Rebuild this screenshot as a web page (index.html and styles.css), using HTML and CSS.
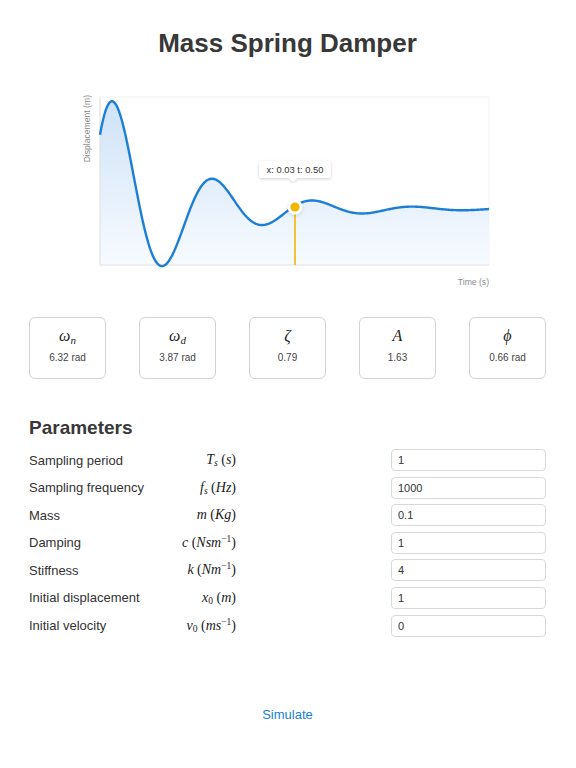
FILE: index.html
```html
<!DOCTYPE html>
<html lang="en">
<head>
  <meta charset="UTF-8">
  <meta name="viewport" content="width=device-width, initial-scale=1.0">
  <title>Mass Spring Damper</title>
  <link rel="stylesheet" href="styles.css">
</head>
<body>
  <div class="page">
    <h1 class="title">Mass Spring Damper</h1>

    <div class="chart">
      <svg width="517" height="210" viewBox="29 85 517 210">
        <defs>
          <linearGradient id="area-fill" x1="0" y1="0" x2="0" y2="1">
            <stop offset="0" stop-color="#cfe2f7"/>
            <stop offset="1" stop-color="#f7fbff"/>
          </linearGradient>
          <filter id="soft-shadow" x="-30%" y="-50%" width="160%" height="220%">
            <feDropShadow dx="0" dy="1" stdDeviation="1.5" flood-color="#000" flood-opacity="0.18"/>
          </filter>
        </defs>
        <rect x="100" y="97" width="389" height="168" fill="none" stroke="#f2f2f2" stroke-width="1"/>
        <path id="area" fill="url(#area-fill)" d=""/>
        <line x1="100" y1="97" x2="100" y2="265" stroke="#e2e2e2" stroke-width="1"/>
        <line x1="100" y1="265" x2="489" y2="265" stroke="#e2e2e2" stroke-width="1"/>
        <path id="curve" fill="none" stroke="#1c7ed6" stroke-width="2.4" stroke-linejoin="round" d=""/>
        <line x1="295" y1="207" x2="295" y2="265" stroke="#f2b600" stroke-width="1.6"/>
        <circle cx="295" cy="207" r="7.5" fill="#fff" filter="url(#soft-shadow)"/>
        <circle cx="295" cy="207" r="4.6" fill="#f2b600"/>
        <g filter="url(#soft-shadow)">
          <rect x="259" y="161" width="72" height="17" rx="2" fill="#fff"/>
          <path d="M289 178 L293 182 L297 178 Z" fill="#fff"/>
        </g>
        <text class="tip-text" x="295" y="173" text-anchor="middle">x: 0.03 t: 0.50</text>
        <text class="axis-text" transform="translate(90,95) rotate(-90)" text-anchor="end">Displacement (m)</text>
        <text class="axis-text" x="489" y="285" text-anchor="end">Time (s)</text>
      </svg>
    </div>

    <div class="stats">
      <div class="stat">
        <div class="sym"><i>ω</i><sub><i>n</i></sub></div>
        <div class="val">6.32 rad</div>
      </div>
      <div class="stat">
        <div class="sym"><i>ω</i><sub><i>d</i></sub></div>
        <div class="val">3.87 rad</div>
      </div>
      <div class="stat">
        <div class="sym"><i>ζ</i></div>
        <div class="val">0.79</div>
      </div>
      <div class="stat">
        <div class="sym"><i>A</i></div>
        <div class="val">1.63</div>
      </div>
      <div class="stat">
        <div class="sym"><i>ϕ</i></div>
        <div class="val">0.66 rad</div>
      </div>
    </div>

    <h2 class="section-title">Parameters</h2>

    <div class="params">
      <div class="label">Sampling period</div>
      <div class="math"><i>T</i><sub><i>s</i></sub> (<i>s</i>)</div>
      <div></div>
      <input type="text" value="1">

      <div class="label">Sampling frequency</div>
      <div class="math"><i>f</i><sub><i>s</i></sub> (<i>Hz</i>)</div>
      <div></div>
      <input type="text" value="1000">

      <div class="label">Mass</div>
      <div class="math"><i>m</i> (<i>Kg</i>)</div>
      <div></div>
      <input type="text" value="0.1">

      <div class="label">Damping</div>
      <div class="math"><i>c</i> (<i>Nsm</i><sup>−1</sup>)</div>
      <div></div>
      <input type="text" value="1">

      <div class="label">Stiffness</div>
      <div class="math"><i>k</i> (<i>Nm</i><sup>−1</sup>)</div>
      <div></div>
      <input type="text" value="4">

      <div class="label">Initial displacement</div>
      <div class="math"><i>x</i><sub>0</sub> (<i>m</i>)</div>
      <div></div>
      <input type="text" value="1">

      <div class="label">Initial velocity</div>
      <div class="math"><i>v</i><sub>0</sub> (<i>ms</i><sup>−1</sup>)</div>
      <div></div>
      <input type="text" value="0">
    </div>

    <div class="actions">
      <button class="simulate-btn">Simulate</button>
    </div>
  </div>

  <script>
    // damped response, drawn in page coordinates (viewBox matches the page)
    const left = 100, right = 489, base = 209, floor = 265;
    const amp = 128, decay = 0.0127, omega = 2 * Math.PI / 100, phase = 0.952;

    let pts = [];
    for (let x = left; x <= right; x += 1) {
      const t = x - left;
      const y = base - amp * Math.exp(-decay * t) * Math.cos(omega * t - phase);
      pts.push(x + ' ' + y.toFixed(2));
    }

    const line = 'M' + pts.join(' L');
    document.getElementById('curve').setAttribute('d', line);
    document.getElementById('area').setAttribute('d', line + ' L' + right + ' ' + floor + ' L' + left + ' ' + floor + ' Z');
  </script>
</body>
</html>
```

FILE: styles.css
```css
body { margin: 0; font-family: "Liberation Sans", Arial, sans-serif; color: #333; background-color: #fff; }
.page { padding: 0 30px 0 29px; }
.title { margin: 0; padding-top: 28px; font-size: 26px; line-height: 30px; text-align: center; color: #383838; }

.chart { margin-top: 27px; height: 210px; }
.chart svg { display: block; }
.axis-text { font-family: "Liberation Sans", Arial, sans-serif; font-size: 8.6px; fill: #8a8a8a; }
.tip-text { font-family: "Liberation Sans", Arial, sans-serif; font-size: 9.4px; fill: #333; }

.stats { display: flex; justify-content: space-between; margin-top: 22px; }
.stat { width: 77px; height: 62px; box-sizing: border-box; border: 1.5px solid #d3d3d3; border-radius: 6px; padding-top: 9px; text-align: center; }
.stat .sym { font-family: "Liberation Serif", "DejaVu Serif", serif; font-size: 16px; line-height: 18px; color: #222; }
.stat .sym sub { font-size: 11px; line-height: 0; vertical-align: -3px; }
.stat .val { margin-top: 7px; font-size: 10px; line-height: 12px; color: #444; }

.section-title { margin: 38px 0 0; font-size: 19px; line-height: 22px; color: #383838; }

.params { display: grid; grid-template-columns: 122px 85px 1fr 155px; row-gap: 5.6px; align-items: center; margin-top: 10px; }
.params .label { font-size: 13px; color: #333; }
.params .math { font-family: "Liberation Serif", "DejaVu Serif", serif; font-size: 14px; text-align: right; color: #222; white-space: nowrap; }
.params .math sub { font-size: 9.5px; line-height: 0; vertical-align: -2px; }
.params .math sup { font-size: 9.5px; line-height: 0; vertical-align: 5px; }
.params input { width: 155px; height: 22px; box-sizing: border-box; padding: 0 6px; font-family: "Liberation Sans", Arial, sans-serif; font-size: 11px; color: #333; border: 1px solid #d9d9d9; border-radius: 4px; outline: none; }

.actions { margin-top: 68px; text-align: center; }
.simulate-btn { padding: 0; border: none; background: none; font-family: "Liberation Sans", Arial, sans-serif; font-size: 13px; line-height: 16px; color: #1a7fd6; cursor: pointer; }
```
